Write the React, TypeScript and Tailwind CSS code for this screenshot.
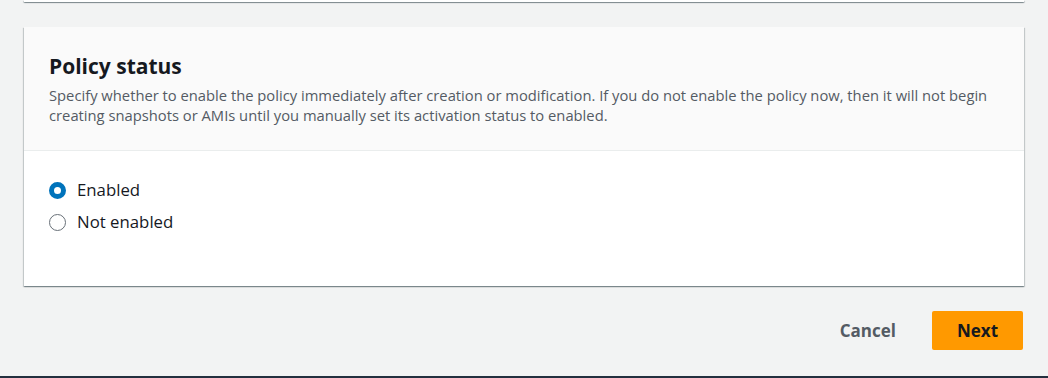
import React, { useState } from "react";

const cardShadow =
  "shadow-[0_1px_1px_0_rgba(0,28,36,0.3),1px_1px_1px_0_rgba(0,28,36,0.15),-1px_1px_1px_0_rgba(0,28,36,0.15)]";

const Radio = ({ checked, label, onClick }: { checked: boolean; label: string; onClick: () => void }) => (
  <label className="flex items-center gap-[11px] cursor-pointer h-[32px]" onClick={onClick}>
    {checked ? (
      <span className="w-[17px] h-[17px] rounded-full border-[5px] border-[#0073bb] bg-white" />
    ) : (
      <span className="w-[17px] h-[17px] rounded-full border-[1.5px] border-[#687078] bg-white" />
    )}
    <span className="text-[16.8px] leading-[24px] text-[#16191f]">{label}</span>
  </label>
);

const App = () => {
  const [status, setStatus] = useState("enabled");

  return (
    <div
      className="w-[1048px] h-[378px] bg-[#f2f3f3] flex flex-col overflow-hidden"
      style={{ fontFamily: '"Open Sans", "Liberation Sans", sans-serif' }}
    >
      {/* tail of the previous card */}
      <div className={`mx-[24px] h-[2px] bg-white ${cardShadow}`} />

      <div className={`mx-[24px] mt-[25px] bg-white ${cardShadow}`}>
        <div className="bg-[#fafafa] border-b border-[#eaeded] px-[25px] pt-[25px] pb-[25px]">
          <h2 className="text-[21px] leading-[28px] font-bold text-[#16191f]">Policy status</h2>
          <p className="text-[14.75px] leading-[20px] text-[#545b64] mt-[5px]">
            Specify whether to enable the policy immediately after creation or modification. If you do not enable the
            policy now, then it will not begin creating snapshots or AMIs until you manually set its activation status
            to enabled.
          </p>
        </div>
        <div className="px-[25px] pt-[23px] h-[135px] flex flex-col">
          <Radio checked={status === "enabled"} label="Enabled" onClick={() => setStatus("enabled")} />
          <Radio checked={status === "disabled"} label="Not enabled" onClick={() => setStatus("disabled")} />
        </div>
      </div>

      <div className="flex justify-end items-center gap-[36px] mr-[25px] mt-[25px]">
        <button className="text-[17px] font-bold text-[#545b64]">Cancel</button>
        <button className="w-[91px] h-[39px] rounded-[2px] bg-[#ff9900] text-[17px] font-bold text-[#16191f]">
          Next
        </button>
      </div>

      <div className="mt-auto h-[2px] bg-[#232f3e]" />
    </div>
  );
};

export default App;
